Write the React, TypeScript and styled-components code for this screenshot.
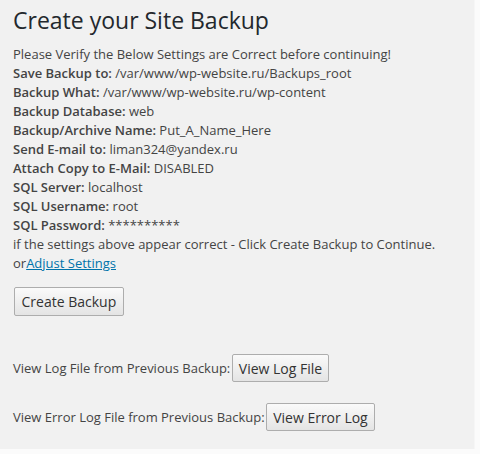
import styled, { createGlobalStyle } from "styled-components";

const GlobalStyle = createGlobalStyle`
  html, body {
    margin: 0;
    padding: 0;
    background: #fbfbfb;
  }
  body {
    font-family: "Open Sans", "Liberation Sans", sans-serif;
    color: #444;
  }
`;

const StyledPanel = styled.div`
  width: 475px;
  height: 449px;
  box-sizing: border-box;
  padding: 6px 13px 0 13px;
  background: #f1f1f1;
  border-right: 1px solid #f6f6f6;
`;

const Title = styled.h1`
  margin: 0;
  font-size: 23px;
  font-weight: 400;
  line-height: 29px;
  color: #23282d;
`;

const Summary = styled.div`
  margin-top: 10px;
  font-size: 13px;
  line-height: 19px;
`;

const Line = styled.div`
  white-space: nowrap;
`;

const Label = styled.strong`
  font-weight: 600;
  color: #444;
`;

const SettingsLink = styled.a`
  color: #0073aa;
  text-decoration: underline;
`;

const Button = styled.button<{ $size?: "big" }>`
  font-family: "Open Sans", "Liberation Sans", sans-serif;
  font-size: 14px;
  color: #333;
  height: ${(p) => (p.$size === "big" ? "29px" : "28px")};
  padding: 0 ${(p) => (p.$size === "big" ? "6.5px" : "6px")};
  margin-left: ${(p) => (p.$size === "big" ? "0" : "1.5px")};
  border: 1px solid #adadad;
  border-radius: 2px;
  background: linear-gradient(#fafafa, #e4e4e4);
  cursor: pointer;
`;

const CreateRow = styled.div`
  margin-top: 14px;
  margin-left: 1px;
`;

const LogRow = styled.div<{ $gap: number }>`
  display: flex;
  align-items: center;
  margin-top: ${(p) => p.$gap}px;
  font-size: 13px;
  white-space: nowrap;
`;

const settings: [string, string][] = [
  ["Save Backup to:", "/var/www/wp-website.ru/Backups_root"],
  ["Backup What:", "/var/www/wp-website.ru/wp-content"],
  ["Backup Database:", "web"],
  ["Backup/Archive Name:", "Put_A_Name_Here"],
  ["Send E-mail to:", "liman324@yandex.ru"],
  ["Attach Copy to E-Mail:", "DISABLED"],
  ["SQL Server:", "localhost"],
  ["SQL Username:", "root"],
  ["SQL Password:", "**********"],
];

function App() {
  return (
    <>
      <GlobalStyle />
      <StyledPanel>
        <Title>Create your Site Backup</Title>
        <Summary>
          <Line>Please Verify the Below Settings are Correct before continuing!</Line>
          {settings.map(([label, value]) => (
            <Line key={label}>
              <Label>{label}</Label> {value}
            </Line>
          ))}
          <Line>if the settings above appear correct - Click Create Backup to Continue.</Line>
          <Line>
            or<SettingsLink href="#">Adjust Settings</SettingsLink>
          </Line>
        </Summary>
        <CreateRow>
          <Button $size="big">Create Backup</Button>
        </CreateRow>
        <LogRow $gap={38}>
          View Log File from Previous Backup:<Button>View Log File</Button>
        </LogRow>
        <LogRow $gap={21}>
          View Error Log File from Previous Backup:<Button>View Error Log</Button>
        </LogRow>
      </StyledPanel>
    </>
  );
}

export default App;
